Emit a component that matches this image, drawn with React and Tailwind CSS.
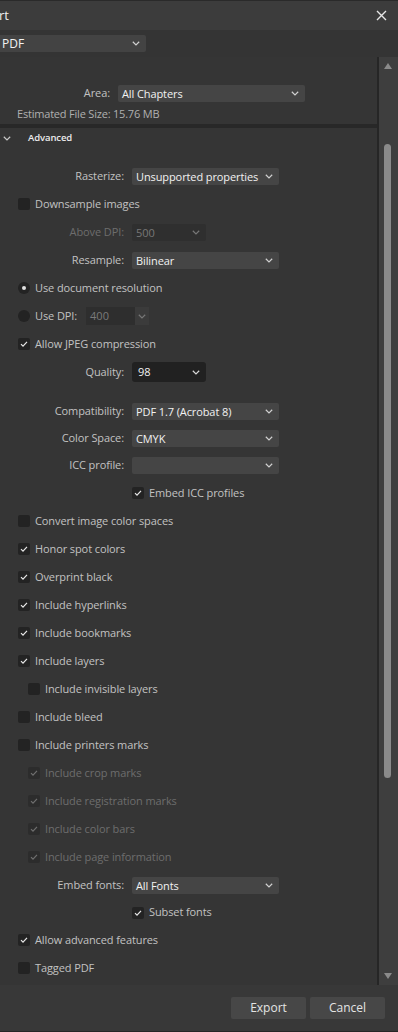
import React from 'react';

const font = { fontFamily: '"Open Sans", "Noto Sans", sans-serif' };

function Chevron({ className = '' }) {
  return (
    <svg width="8" height="5" viewBox="0 0 8 5" className={className}>
      <path d="M0.8 0.8 L4 3.9 L7.2 0.8" fill="none" stroke="currentColor" strokeWidth="1.2" />
    </svg>
  );
}

function Check({ dim }) {
  return (
    <svg width="12" height="12" viewBox="0 0 12 12">
      <path
        d="M3 6.2 L5 8.2 L9 3.8"
        fill="none"
        stroke={dim ? '#6f6f6f' : '#e8e8e8'}
        strokeWidth="1.2"
      />
    </svg>
  );
}

function Select({ value, width = 'w-[147px]', dark, disabled }) {
  return (
    <div
      className={`${width} h-[17px] rounded-[2px] flex items-center justify-between pl-[4px] pr-[6px] ${
        dark ? 'bg-[#2f2f2f]' : 'bg-[#454545]'
      } ${disabled ? 'text-[#777]' : 'text-[#f2f2f2]'}`}
    >
      <span className="text-[11px] leading-none whitespace-nowrap tracking-[-0.1px]">{value}</span>
      <Chevron className={disabled ? 'text-[#777]' : 'text-[#d0d0d0]'} />
    </div>
  );
}

function FieldRow({ label, children, disabled, h = 'h-[28px]' }) {
  return (
    <div className={`flex items-center ${h}`}>
      <div
        className={`w-[124px] text-right text-[11px] tracking-[-0.1px] whitespace-nowrap ${
          disabled ? 'text-[#6d6d6d]' : 'text-[#c2c2c2]'
        }`}
      >
        {label}
      </div>
      <div className="ml-[8px]">{children}</div>
    </div>
  );
}

function CheckRow({ label, checked, indent, disabled, h = 'h-[28px]' }) {
  return (
    <div className={`flex items-center ${h} ${indent ? 'pl-[28px]' : 'pl-[18px]'}`}>
      <div
        className={`w-[12px] h-[12px] rounded-[2px] flex items-center justify-center ${
          disabled ? 'bg-[#2c2c2c]' : 'bg-[#232323]'
        }`}
      >
        {checked && <Check dim={disabled} />}
      </div>
      <span
        className={`ml-[5px] text-[11px] tracking-[-0.1px] whitespace-nowrap ${
          disabled ? 'text-[#6d6d6d]' : 'text-[#c2c2c2]'
        }`}
      >
        {label}
      </span>
    </div>
  );
}

function Radio({ selected }) {
  return (
    <div className="w-[12px] h-[12px] rounded-full bg-[#232323] flex items-center justify-center">
      {selected && <div className="w-[4px] h-[4px] rounded-full bg-[#e0e0e0]" />}
    </div>
  );
}

export default function App() {
  return (
    <div style={font} className="w-[398px] h-[1032px] bg-[#353535] flex flex-col overflow-hidden border-t border-[#2a2a2a]">
      {/* title bar */}
      <div className="h-[29px] bg-[#3c3c3c] flex items-center justify-between pr-[11px]">
        <span className="text-[13px] text-[#eeeeee] -ml-[1px]">rt</span>
        <svg width="11" height="11" viewBox="0 0 11 11">
          <path d="M1 1 L10 10 M10 1 L1 10" stroke="#e6e6e6" strokeWidth="1.4" />
        </svg>
      </div>

      {/* format */}
      <div className="h-[27px] bg-[#343434] pt-[5px]">
        <div className="w-[146px] h-[17px] bg-[#434343] rounded-r-[2px] flex items-center justify-between pl-[2px] pr-[6px]">
          <span className="text-[12px] text-[#f2f2f2]">PDF</span>
          <Chevron className="text-[#d0d0d0]" />
        </div>
      </div>

      {/* scroll area */}
      <div className="h-[928px] flex">
        <div className="w-[377px] flex flex-col overflow-hidden">
          <div className="h-[28px]" />
          <div className="flex items-center h-[17px]">
            <div className="w-[110px] text-right text-[11px] tracking-[-0.1px] text-[#c2c2c2]">Area:</div>
            <div className="ml-[8px]">
              <Select value="All Chapters" width="w-[187px]" />
            </div>
          </div>
          <div className="h-[22px] flex items-center pl-[17px] pt-[3px] text-[11px] tracking-[-0.2px] text-[#b0b0b0]">
            Estimated File Size: 15.76 MB
          </div>
          <div className="h-[4px] bg-[#282828]" />
          <div className="h-[20px] flex items-center">
            <Chevron className="ml-[3px] text-[#c8c8c8]" />
            <span className="ml-[17px] text-[9.5px] font-semibold tracking-[-0.1px] text-[#ececec]">Advanced</span>
          </div>
          <div className="h-[14px]" />

          <FieldRow label="Rasterize:">
            <Select value="Unsupported properties" />
          </FieldRow>
          <CheckRow label="Downsample images" />
          <FieldRow label="Above DPI:" disabled>
            <Select value="500" width="w-[74px]" dark disabled />
          </FieldRow>
          <FieldRow label="Resample:">
            <Select value="Bilinear" />
          </FieldRow>
          <div className="flex items-center h-[28px] pl-[18px]">
            <Radio selected />
            <span className="ml-[5px] text-[11px] tracking-[-0.1px] text-[#c2c2c2]">Use document resolution</span>
          </div>
          <div className="flex items-center h-[28px] pl-[18px]">
            <Radio />
            <span className="ml-[5px] text-[11px] tracking-[-0.1px] text-[#c2c2c2]">Use DPI:</span>
            <div className="ml-[9px] flex h-[18px]">
              <div className="w-[49px] bg-[#2e2e2e] flex items-center pl-[4px] text-[11px] text-[#7a7a7a]">
                400
              </div>
              <div className="w-[14px] bg-[#3b3b3b] flex items-center justify-center">
                <Chevron className="text-[#777]" />
              </div>
            </div>
          </div>
          <CheckRow label="Allow JPEG compression" checked />
          <FieldRow label="Quality:">
            <div className="w-[74px] h-[20px] rounded-[3px] bg-[#212121] flex items-center justify-between pl-[6px] pr-[6px]">
              <span className="text-[11px] text-[#f2f2f2]">98</span>
              <Chevron className="text-[#d8d8d8]" />
            </div>
          </FieldRow>
          <div className="h-[12px]" />
          <FieldRow label="Compatibility:" h="h-[27px]">
            <Select value="PDF 1.7 (Acrobat 8)" />
          </FieldRow>
          <FieldRow label="Color Space:" h="h-[27px]">
            <Select value="CMYK" />
          </FieldRow>
          <FieldRow label="ICC profile:" h="h-[27px]">
            <Select value="" />
          </FieldRow>
          <div className="flex items-center h-[28px] pl-[132px]">
            <div className="w-[12px] h-[12px] rounded-[2px] bg-[#232323] flex items-center justify-center">
              <Check />
            </div>
            <span className="ml-[5px] text-[11px] tracking-[-0.1px] text-[#c2c2c2]">Embed ICC profiles</span>
          </div>
          <CheckRow label="Convert image color spaces" />
          <CheckRow label="Honor spot colors" checked />
          <CheckRow label="Overprint black" checked />
          <CheckRow label="Include hyperlinks" checked />
          <CheckRow label="Include bookmarks" checked />
          <CheckRow label="Include layers" checked />
          <CheckRow label="Include invisible layers" indent />
          <CheckRow label="Include bleed" />
          <CheckRow label="Include printers marks" />
          <CheckRow label="Include crop marks" indent checked disabled />
          <CheckRow label="Include registration marks" indent checked disabled />
          <CheckRow label="Include color bars" indent checked disabled />
          <CheckRow label="Include page information" indent checked disabled />
          <FieldRow label="Embed fonts:">
            <Select value="All Fonts" />
          </FieldRow>
          <div className="flex items-center h-[27px] pl-[132px]">
            <div className="w-[12px] h-[12px] rounded-[2px] bg-[#232323] flex items-center justify-center">
              <Check />
            </div>
            <span className="ml-[5px] text-[11px] tracking-[-0.1px] text-[#c2c2c2]">Subset fonts</span>
          </div>
          <CheckRow label="Allow advanced features" checked />
          <CheckRow label="Tagged PDF" />
        </div>
        <div className="w-[2px] bg-[#262626]" />
        <div className="w-[19px] bg-[#3e3e3e] flex flex-col items-center pt-[6px] pb-[6px]">
          <svg width="8" height="6" viewBox="0 0 8 6" className="ml-[-2px]">
            <path d="M4 0 L8 6 L0 6 Z" fill="#8a8a8a" />
          </svg>
          <div className="mt-[75px] w-[7px] h-[634px] rounded-full bg-[#8a8a8a] ml-[-2px]" />
          <div className="flex-1" />
          <svg width="8" height="6" viewBox="0 0 8 6" className="ml-[-2px]">
            <path d="M0 0 L8 0 L4 6 Z" fill="#8a8a8a" />
          </svg>
        </div>
      </div>

      {/* footer */}
      <div className="flex-1 bg-[#383838] flex justify-end items-start pt-[12px] pr-[13px] gap-[4px] border-b border-[#262626]">
        <button className="w-[75px] h-[22px] rounded-[2px] bg-[#474747] text-[12px] text-[#e4e4e4]">
          Export
        </button>
        <button className="w-[75px] h-[22px] rounded-[2px] bg-[#474747] text-[12px] text-[#e4e4e4]">
          Cancel
        </button>
      </div>
    </div>
  );
}
